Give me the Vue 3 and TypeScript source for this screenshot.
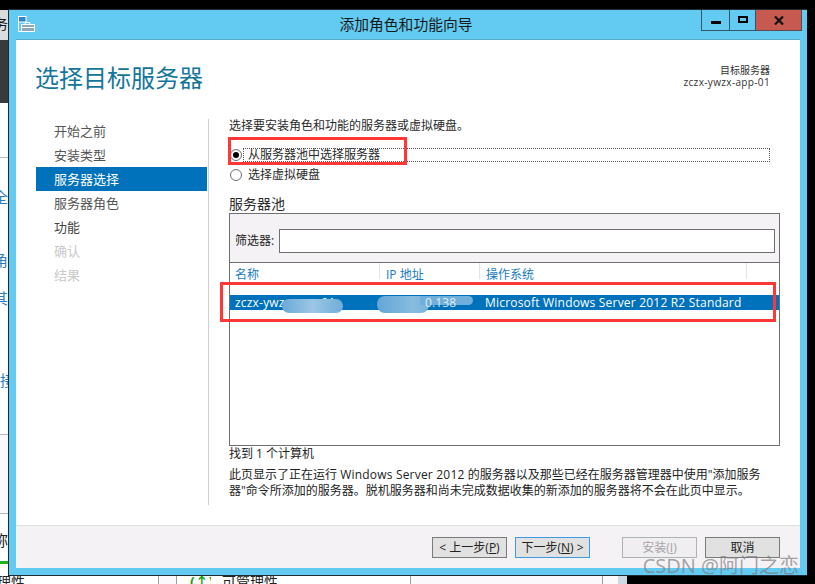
<script setup lang="ts">
const steps = [
  { label: '开始之前', state: 'done' },
  { label: '安装类型', state: 'done' },
  { label: '服务器选择', state: 'active' },
  { label: '服务器角色', state: 'done' },
  { label: '功能', state: 'next' },
  { label: '确认', state: 'off' },
  { label: '结果', state: 'off' },
];

const leftBlocks = [
  { cls: 'lb-black', h: 1, text: '' },
  { cls: 'lb-grey', h: 30, text: '务' },
  { cls: 'lb-dark', h: 63, text: '' },
  { cls: 'lb-white', h: 55, text: '' },
  { cls: 'lb-links', h: 277, text: '' },
  { cls: 'lb-pale', h: 79, text: '' },
  { cls: 'lb-white2', h: 62, text: '' },
];
const leftLinks = ['全', '角', '其', '接'];
</script>

<template>
  <div class="screen">
    <div class="top-black"></div>
    <div class="middle">
      <div class="left-strip">
        <div v-for="(b, i) in leftBlocks" :key="i" :class="['lb', b.cls]" :style="{ height: b.h + 'px' }">
          <span v-if="b.text" class="lb-char">{{ b.text }}</span>
          <template v-if="b.cls === 'lb-links'">
            <span v-for="c in leftLinks" :key="c" class="lb-link">{{ c }}</span>
          </template>
          <template v-if="b.cls === 'lb-white2'">
            <span class="lb-dark-char">称</span>
            <span class="lb-green"></span>
          </template>
        </div>
      </div>
      <div class="window">
        <div class="titlebar">
          <svg class="app-icon" width="17" height="16" viewBox="0 0 17 16" fill="none">
            <rect x="0.5" y="0.5" width="7.5" height="5.5" fill="#2b86cc" stroke="#fff" />
            <path d="M0.5 6v9.5h4" stroke="#fff" />
            <path d="M7 8V6.5h5V8" stroke="#fff" />
            <rect x="3.5" y="8.5" width="13" height="7" fill="#8ba8bc" stroke="#fff" />
            <path d="M4 11.5h12" stroke="#fff" />
          </svg>
          <div class="title">添加角色和功能向导</div>
          <div class="win-btns">
            <div class="wb wb-min"><span></span></div>
            <div class="wb wb-max"><span></span></div>
            <div class="wb wb-close">
              <svg width="10" height="9" viewBox="0 0 10 9"><path d="M1 0.5l8 8M9 0.5l-8 8" stroke="#111" stroke-width="2.2" /></svg>
            </div>
          </div>
        </div>
        <div class="client">
          <div class="head">
            <h1>选择目标服务器</h1>
            <div class="target">
              <div>目标服务器</div>
              <div class="host">zczx-ywzx-app-01</div>
            </div>
          </div>
          <div class="body">
            <nav class="side">
              <div v-for="s in steps" :key="s.label" :class="['step', s.state]">{{ s.label }}</div>
            </nav>
            <main class="content">
              <p class="intro">选择要安装角色和功能的服务器或虚拟硬盘。</p>
              <div class="radio-row first">
                <span class="radio on"></span>
                <span class="radio-label focus"><span>从服务器池中选择服务器</span></span>
              </div>
              <div class="radio-row">
                <span class="radio"></span>
                <span class="radio-label">选择虚拟硬盘</span>
              </div>
              <div class="pool-title">服务器池</div>
              <div class="pool">
                <div class="filter">
                  <label>筛选器:</label>
                  <div class="input"></div>
                </div>
                <div class="cols">
                  <div class="col c1">名称</div>
                  <div class="col c2">IP 地址</div>
                  <div class="col c3">操作系统</div>
                  <div class="col c4"></div>
                </div>
                <div class="row">
                  <div class="cell c1">zczx-ywzx-app-01</div>
                  <div class="cell c2"></div>
                  <div class="cell c3">Microsoft Windows Server 2012 R2 Standard</div>
                </div>
                <span class="blur b1"></span>
                <span class="blur b2"></span>
                <span class="blur b3"></span>
                <span class="ip">0.138</span>
                <span class="mark mark-row"></span>
              </div>
              <div class="found">找到 1 个计算机</div>
              <p class="note">此页显示了正在运行 <span class="lat">Windows Server 2012</span> 的服务器以及那些已经在服务器管理器中使用"添加服务<br />器"命令所添加的服务器。脱机服务器和尚未完成数据收集的新添加的服务器将不会在此页中显示。</p>
              <span class="mark mark-radio"></span>
            </main>
          </div>
          <div class="footer">
            <button class="btn">&lt; 上一步(<u>P</u>)</button>
            <button class="btn default">下一步(<u>N</u>) &gt;</button>
            <button class="btn disabled install">安装(<u>I</u>)</button>
            <button class="btn">取消</button>
          </div>
        </div>
        <div class="watermark">CSDN @阿门之恋</div>
      </div>
      <div class="right-black"></div>
    </div>
    <div class="bottom">
      <div class="bt bt1"><span>理性</span></div>
      <div class="bt bt2"></div>
      <div class="bt bt3"><span class="up">(↑)</span></div>
      <div class="bt bt4">可管理性</div>
      <div class="bt bt5"></div>
      <div class="bt bt6"></div>
      <div class="bt bt7"></div>
    </div>
  </div>
</template>

<style>
html, body { margin: 0; background: #000; overflow: hidden; }
</style>

<style scoped>
.screen {
  width: 815px;
  height: 584px;
  display: flex;
  flex-direction: column;
  background: #000;
  overflow: hidden;
  font-family: "Open Sans", "Noto Sans CJK SC", sans-serif;
  font-size: 12px;
  color: #1f1f1f;
}
.top-black { height: 9px; flex: none; }
.middle { display: flex; height: 567px; flex: none; }
.left-strip { width: 8px; flex: none; overflow: hidden; background: #fff; }
.lb { position: relative; box-sizing: border-box; overflow: hidden; }
.lb-black { background: #000; }
.lb-grey { background: #dcdcdc; }
.lb-char { position: absolute; right: 0; top: 6px; font-size: 14px; line-height: 16px; color: #111; }
.lb-dark { background: #3a3a3a; }
.lb-white { background: #fff; border-bottom: 1px solid #b9b9b9; }
.lb-links { background: #fff; border-bottom: 1px solid #b9b9b9; }
.lb-link { position: absolute; right: 0; font-size: 15px; line-height: 18px; color: #2b7cc0; }
.lb-link:nth-child(1) { top: 30px; }
.lb-link:nth-child(2) { top: 93px; }
.lb-link:nth-child(3) { top: 131px; }
.lb-link:nth-child(4) { top: 213px; left: 0; right: auto; }
.lb-pale { background: #fbf8fb; border-bottom: 1px solid #b9b9b9; }
.lb-white2 { background: #fff; }
.lb-dark-char { position: absolute; right: 0; top: 17px; font-size: 15px; line-height: 18px; color: #222; }
.lb-green { position: absolute; left: 0; right: 0; top: 47px; height: 3px; background: #1eb01e; }

.window {
  width: 799px;
  flex: none;
  box-sizing: border-box;
  border: 1px solid #1f2a33;
  border-right: 0;
  background: #63cbf1;
  display: flex;
  flex-direction: column;
  padding: 0 7px 7px 7px;
  position: relative;
}
.titlebar { height: 29px; flex: none; display: flex; align-items: flex-start; position: relative; }
.app-icon { position: absolute; left: 2px; top: 6px; }
.title {
  flex: 1;
  text-align: center;
  font-size: 14.8px;
  line-height: 28px;
  padding-right: 4px;
  color: #1a1a1a;
}
.win-btns { position: absolute; right: -2px; top: 0; display: flex; height: 21px; }
.wb {
  box-sizing: border-box;
  height: 21px;
  border: 1px solid #35566b;
  border-top: 0;
  display: flex;
  align-items: center;
  justify-content: center;
}
.wb-min { width: 29px; }
.wb-min span { display: block; width: 10px; height: 3px; background: #000; margin-top: 5px; }
.wb-max { width: 26px; border-left: 0; }
.wb-max span { display: block; width: 10px; height: 7px; box-sizing: border-box; border: 2px solid #000; margin-top: -1px; }
.wb-close { width: 46px; border-left: 0; background: #c75a50; border-color: #5e4a4a; }

.client {
  flex: 1;
  min-height: 0;
  background: #fff;
  border-top: 1px solid #59a9cc;
  display: flex;
  flex-direction: column;
}
.head { height: 79px; flex: none; display: flex; justify-content: space-between; padding: 22px 30px 0 20px; box-sizing: border-box; }
.head h1 { margin: 0; font-size: 24px; font-weight: 400; line-height: 32px; color: #13759b; margin-left: -1px; }
.target { text-align: right; font-size: 10px; line-height: 12px; color: #333; padding-top: 2px; }
.host { letter-spacing: 0.35px; }

.body { flex: 1; min-height: 0; display: flex; position: relative; }
.side {
  width: 172px;
  flex: none;
  margin-left: 20px;
  height: 386px;
  border-right: 1px solid #cfcfcf;
}
.step { height: 24px; line-height: 24px; padding-left: 18px; font-size: 13px; color: #555; }
.step.active { background: #0072bc; color: #fff; margin-right: 1px; }
.step.next { color: #444; }
.step.off { color: #c9c9c9; }

.content { position: relative; flex: none; width: 551px; margin-left: 20px; }
.intro { margin: 0; line-height: 14px; color: #2a2a2a; }
.radio-row { display: flex; align-items: center; height: 19px; position: relative; }
.radio-row.first { margin-top: 14px; height: 16px; margin-bottom: 2px; }
.radio {
  width: 12px;
  height: 12px;
  box-sizing: border-box;
  border: 1px solid #6f6f6f;
  border-radius: 50%;
  margin-left: 1px;
  flex: none;
  position: relative;
  background: #fff;
}
.radio.on::after {
  content: "";
  position: absolute;
  left: 2px;
  top: 2px;
  width: 6px;
  height: 6px;
  border-radius: 50%;
  background: #000;
}
.radio-label { margin-left: 6px; line-height: 14px; color: #2a2a2a; }
.radio-label.focus {
  margin-left: 1px;
  flex: none;
  width: 527px;
  box-sizing: border-box;
  height: 14px;
  border: 1px dotted #555;
  padding-left: 4px;
  line-height: 12px;
}
.pool-title { font-size: 14px; line-height: 18px; margin-top: 11px; color: #2a2a2a; }
.pool {
  position: relative;
  box-sizing: border-box;
  width: 551px;
  height: 233px;
  border: 1px solid #6f6f6f;
}
.filter {
  height: 49px;
  background: #f5f2f6;
  border-bottom: 1px solid #6f6f6f;
  display: flex;
  align-items: flex-start;
  padding: 15px 4px 0 5px;
  box-sizing: border-box;
}
.filter label { width: 44px; flex: none; color: #222; line-height: 24px; }
.input { flex: 1; height: 24px; box-sizing: border-box; border: 1px solid #6f6f6f; background: #fff; }
.cols { display: flex; height: 32px; color: #1a7ac0; }
.col { box-sizing: border-box; height: 16px; padding-left: 5px; line-height: 24px; border-right: 1px solid #e3e3e3; white-space: nowrap; }
.c1 { width: 150px; }
.c2 { width: 100px; padding-left: 6px; }
.c3 { width: 267px; padding-left: 6px; }
.c4 { flex: 1; border-right: 0; }
.row {
  display: flex;
  height: 15px;
  background: #0072bc;
  color: #fff;
  line-height: 15px;
  white-space: nowrap;
}
.cell { box-sizing: border-box; padding-left: 5px; letter-spacing: 0.2px; }
.cell.c3 { width: auto; padding-left: 5px; }
.blur { position: absolute; border-radius: 8px; }
.b1 { left: 52px; top: 85px; width: 61px; height: 14px; background: linear-gradient(90deg, #6aa9d8, #9cc6e6 50%, #6fadd9); }
.b2 { left: 147px; top: 82px; width: 52px; height: 17px; background: linear-gradient(90deg, #62a6d6, #87bce0 70%, #78b3dc); }
.b3 { left: 190px; top: 82px; width: 53px; height: 9px; border-radius: 0 6px 6px 0; background: #70aedb; }
.ip { position: absolute; left: 195px; top: 81px; line-height: 15px; color: rgba(255, 255, 255, 0.8); letter-spacing: 0.1px; }
.mark { position: absolute; border: 3px solid #ff3737; box-sizing: border-box; pointer-events: none; }
.mark-row { left: -10px; top: 68px; width: 556px; height: 40px; }
.mark-radio { left: -1px; top: 18px; width: 179px; height: 28px; }
.found { line-height: 16px; color: #222; }
.note { margin: 5px 0 0; line-height: 16px; color: #222; white-space: nowrap; }
.lat { letter-spacing: 0.2px; }

.footer {
  height: 43px;
  flex: none;
  box-sizing: border-box;
  border-top: 1px solid #dfdfdf;
  background: #f5f2f6;
  display: flex;
  align-items: flex-start;
  padding: 11px 20px 0 0;
  justify-content: flex-end;
  gap: 8px;
}
.btn {
  width: 75px;
  height: 21px;
  box-sizing: border-box;
  border: 1px solid #7a7a7a;
  background: #e1e1e1;
  font: inherit;
  font-size: 12px;
  line-height: 17px;
  padding: 0;
  color: #222;
}
.btn.default { border-color: #3c9be6; }
.btn.disabled { background: #f0eef1; border-color: #adb2b5; color: #a5a5a5; }
.install { margin-left: 24px; }
.watermark {
  position: absolute;
  right: 8px;
  bottom: -3px;
  font-size: 20px;
  line-height: 24px;
  color: rgba(125, 125, 125, 0.7);
  white-space: nowrap;
}
.right-black { flex: 1; background: #000; }
.bottom { flex: 1; display: flex; background: #000; }
.bt { box-sizing: border-box; height: 8px; overflow: hidden; border-right: 1px solid #9d9d9d; background: #fff; font-size: 14px; line-height: 12px; color: #222; white-space: nowrap; }
.bt1 { width: 159px; }
.bt1 span { margin-left: -3px; }
.bt2 { width: 18px; background: #fcf9fc; }
.bt3 { width: 34px; padding-left: 13px; border-right: 0; }
.up { color: #12a512; font-weight: 700; font-size: 14px; }
.bt4 { width: 200px; padding-left: 11px; }
.bt5 { width: 192px; background: #fcf9fc; }
.bt6 { width: 15px; background: #fcf9fc; border-right: 0; }
.bt7 { width: 9px; background: #cdd9e0; border-right: 0; }
</style>
